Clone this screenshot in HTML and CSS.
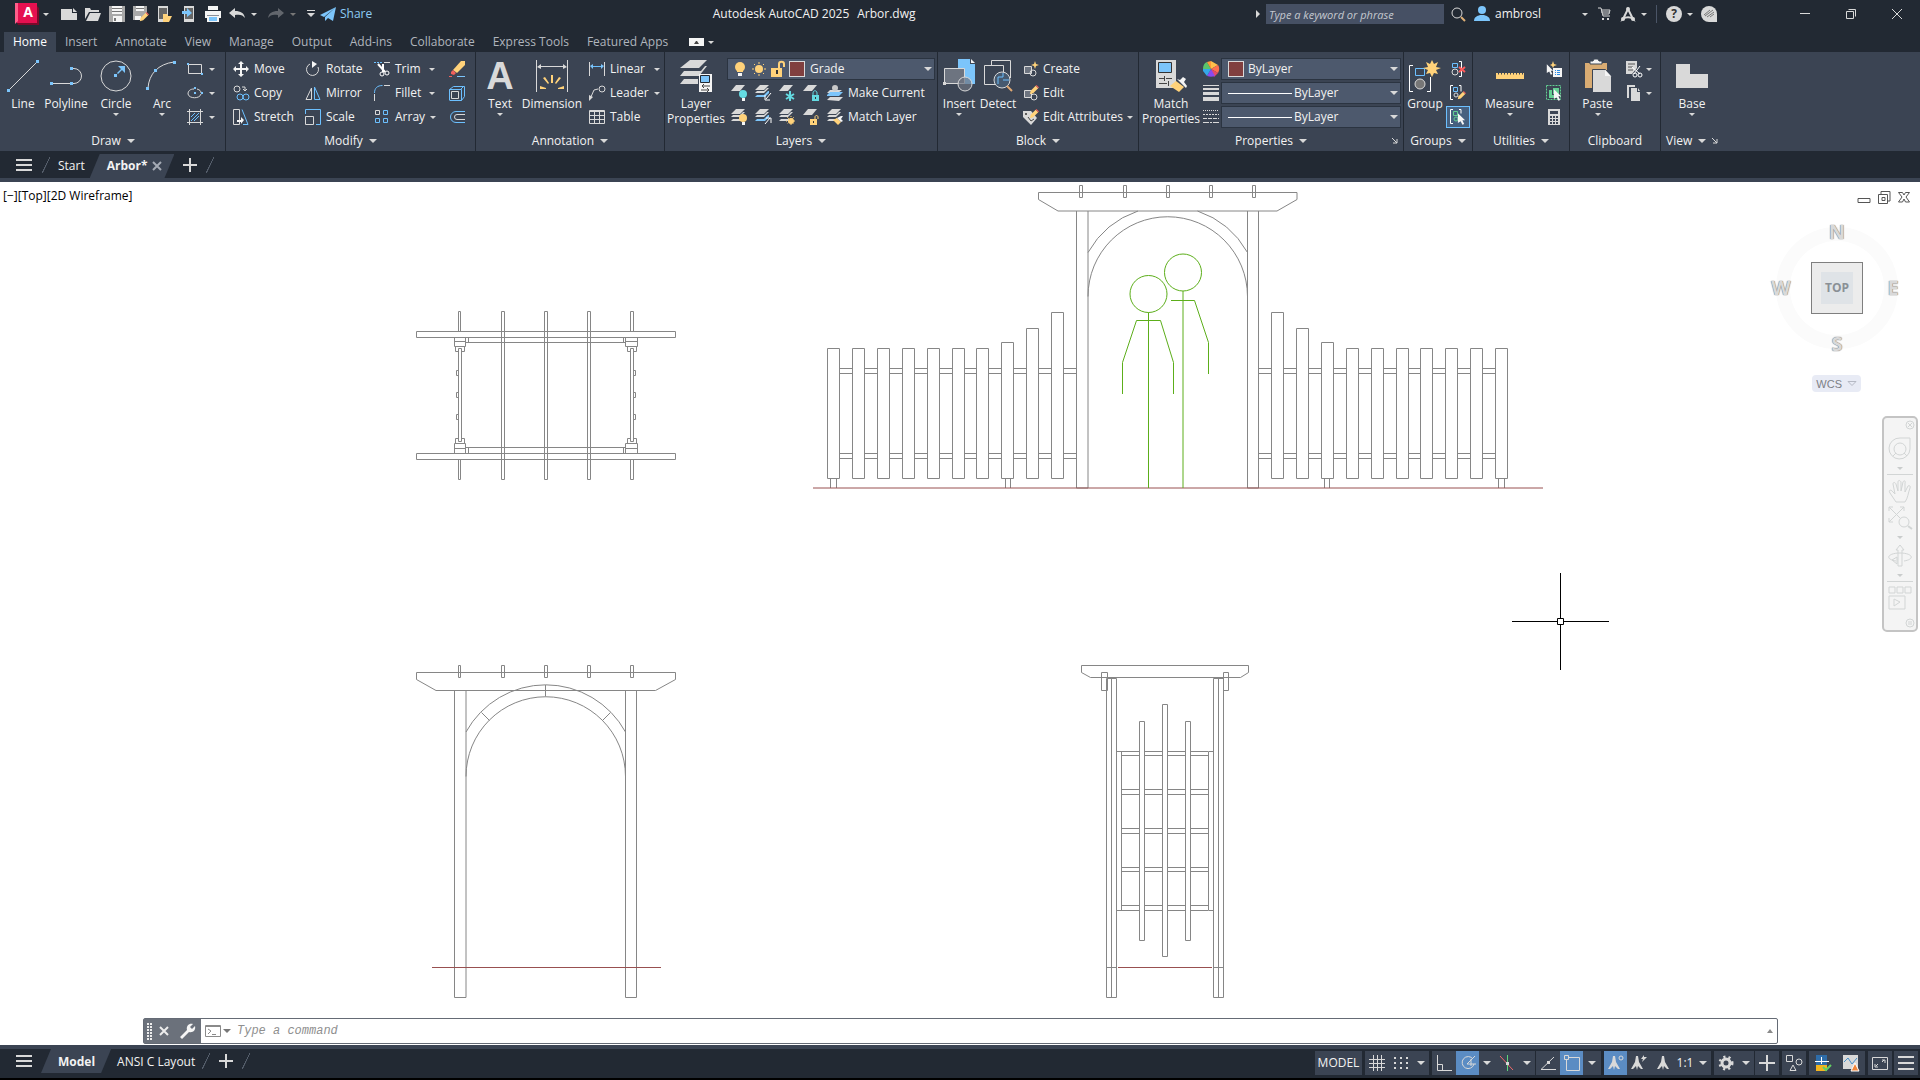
FILE: index.html
```html
<!DOCTYPE html>
<html lang="en">
<head>
    <meta charset="UTF-8">
    <meta name="viewport" content="width=device-width, initial-scale=1.0">
    <title>Autodesk AutoCAD 2025 - Arbor.dwg</title>
    <link rel="stylesheet" href="styles.css">
</head>
<body>
    <!-- shared icon parts -->
    <svg class="sprite" aria-hidden="true">
        <symbol id="sheet" viewBox="0 0 16 16"><path class="w" d="M5 0h9L9 6H0z"/></symbol>
        <symbol id="sheets" viewBox="0 0 16 16">
            <path class="w" d="M5 0h9L9 5H0zM0 8l2-2h7l3-3h2L9 8zM0 12l2-2h7l1-1v3z"/>
        </symbol>
        <symbol id="sheets-blue" viewBox="0 0 16 16">
            <path class="w" d="M5 0h9L9 5H0zM0 8l2-2h7l3-3h2L9 8z"/>
            <path class="bf" d="M0 12l2-2h7l4-4h1v2l-4 4z"/>
        </symbol>
        <symbol id="cursor" viewBox="0 0 10 13"><path class="p" d="M1 0l8 8H6l2 4-2 1-2-4-3 2z"/></symbol>
        <symbol id="pencil" viewBox="0 0 12 12">
            <path class="y" d="M8 1l3 3-6 6-4 1 1-4z"/><path class="r" d="M8 1l1-1 3 3-1 1z"/>
        </symbol>
        <symbol id="menu" viewBox="0 0 16 12"><path class="w" d="M0 0h16v2H0zM0 5h16v2H0zM0 10h16v2H0z"/></symbol>
        <symbol id="plus" viewBox="0 0 14 14"><path class="w" d="M6 0h2v6h6v2H8v6H6V8H0V6h6z"/></symbol>
        <symbol id="anno" viewBox="0 0 16 16"><path class="w" d="M7 1h2l1 6 4 7h-2l-3-3-1 4-1-4-3 3H2l4-7z"/></symbol>
        <symbol id="launch" viewBox="0 0 6 6"><path class="s" d="M0 0l5 5M5 1v4H1"/></symbol>
    </svg>

    <header class="titlebar">
        <div class="quick">
            <button class="app" aria-label="Application menu">
                <svg class="logo" viewBox="0 0 24 23"><path fill="#7a0a2a" d="M22 3l2 2v17H3l-1-2z"/><path fill="#e51050" d="M0 0h22v20H2z"/><path fill="#ff5f8b" d="M0 0h3v18l-3 3z"/><text x="13" y="14" text-anchor="middle">A</text></svg>
                <i class="caret"></i>
            </button>
            <button aria-label="New"><svg viewBox="0 0 16 16"><path class="w" d="M0 3h11v4h5v7H0zM12 2l4 4h-4z"/></svg></button>
            <button aria-label="Open"><svg viewBox="0 0 16 16"><path class="w" d="M0 2h5l1 2h8v2H4L0 13zM5 7h11l-3 8H1z"/></svg></button>
            <button aria-label="Save"><svg viewBox="0 0 16 16"><path fill="#a9a9a9" d="M0 0h16v16H0z"/><path class="p" d="M3 0h10v8H3zM4 10h9v6H4z"/><path fill="#777" d="M3 2h10v1H3zM3 5h10v1H3zM5 12h2v3H5z"/></svg></button>
            <button aria-label="Save as"><svg viewBox="0 0 16 16"><path fill="#a9a9a9" d="M0 0h14v7l-7 7H0z"/><path class="p" d="M3 0h8v5H3zM2 10h6v4H2z"/><path fill="#777" d="M3 2h8v1H3z"/><use href="#pencil" x="6" y="6" width="10" height="10"/></svg></button>
            <button aria-label="Open from mobile"><svg viewBox="0 0 16 16"><path class="w" d="M1 0h10v16H1z"/><path fill="#666" d="M2 2h8v11H2z"/><path class="y" d="M6 8h4l1 2h4l-3 6H6z"/></svg></button>
            <button aria-label="Save to mobile"><svg viewBox="0 0 16 16"><path class="w" d="M3 0h10v16H3z"/><path fill="#666" d="M4 2h8v11H4z"/><path class="bf" d="M1 5h5V2l5 5-5 4V8H1z"/></svg></button>
            <button aria-label="Plot"><svg viewBox="0 0 16 16"><path class="p" d="M3 0h10v4H3zM0 5h16v7H0zM2 12h12v4H2z"/><path fill="#8a8f98" d="M2 9h12v1H2z"/><path class="bf" d="M4 11h8v4H4z"/></svg></button>
            <button aria-label="Undo"><svg viewBox="0 0 16 16"><path class="w" d="M0 7l6-5v3c6 0 9 2 10 7-2-3-5-4-10-3v3z"/></svg></button>
            <i class="caret"></i>
            <button class="off" aria-label="Redo"><svg viewBox="0 0 16 16"><path class="w" d="M16 7l-6-5v3C4 5 1 7 0 12c2-3 5-4 10-3v3z"/></svg></button>
            <i class="caret faded"></i>
            <button class="tiny" aria-label="Customize"><svg viewBox="0 0 8 8"><path class="w" d="M0 0h8v1H0zM0 3h8L4 7z"/></svg></button>
            <a class="share" href="#"><svg viewBox="0 0 16 16"><path class="bf" d="M16 1L0 9l4 2zM16 1L5 11v4l3-3zM16 1L8 12l5 3z"/></svg>Share</a>
        </div>
        <h1><span>Autodesk AutoCAD 2025</span><span>Arbor.dwg</span></h1>
        <div class="account">
            <i class="caret side"></i>
            <input type="text" aria-label="Search" placeholder="Type a keyword or phrase">
            <button aria-label="Search"><svg viewBox="0 0 16 16"><circle class="s" cx="7" cy="7" r="5"/><path stroke="#dfb076" stroke-width="2" d="M11 11l4 4"/></svg></button>
            <button class="user"><svg viewBox="0 0 16 16"><circle class="bf" cx="8" cy="4" r="4"/><path class="bf" d="M0 15c0-4 3-5 6-6h4c3 1 6 2 6 6z"/></svg><span>ambrosl</span><i class="caret"></i></button>
            <button aria-label="Store"><svg viewBox="0 0 16 16"><path class="s" d="M2 2h3l2 8h7M5 4h9l-1 4H7M5 6h8"/><path class="w" d="M6 12h2v2H6zM11 12h2v2h-2z"/></svg></button>
            <button class="with-caret" aria-label="Apps"><svg viewBox="0 0 16 16"><path stroke="#d9d9d9" stroke-width="2" d="M8 3L3 13c3-2 7-2 10 0z"/><circle class="w" cx="8" cy="3" r="2"/><circle class="w" cx="3" cy="13" r="2"/><circle class="w" cx="13" cy="13" r="2"/></svg><i class="caret"></i></button>
            <span class="rule"></span>
            <button class="with-caret" aria-label="Help"><svg viewBox="0 0 16 16"><circle class="w" cx="8" cy="8" r="8"/><text class="help" x="8" y="12" text-anchor="middle">?</text></svg><i class="caret"></i></button>
            <button aria-label="Assistant"><svg viewBox="0 0 16 16"><path class="w" d="M8 0a8 8 0 0 1 8 8v8H8A8 8 0 0 1 8 0z"/><path stroke="#777" d="M3 9l6-5M4 10l8-6M6 11l7-5M9 11l4-3"/></svg></button>
        </div>
        <div class="window">
            <button aria-label="Minimize"><svg viewBox="0 0 10 10"><path class="w" d="M0 4h10v1H0z"/></svg></button>
            <button aria-label="Restore"><svg viewBox="0 0 10 10"><path class="s" d="M.5 2.500h7v7h-7zM2.500.5h7v7"/></svg></button>
            <button aria-label="Close"><svg viewBox="0 0 10 10"><path class="s" d="M0 0l10 10M10 0L0 10"/></svg></button>
        </div>
    </header>

    <nav class="tabs">
        <a class="on" href="#">Home</a>
        <a href="#">Insert</a>
        <a href="#">Annotate</a>
        <a href="#">View</a>
        <a href="#">Manage</a>
        <a href="#">Output</a>
        <a href="#">Add-ins</a>
        <a href="#">Collaborate</a>
        <a href="#">Express Tools</a>
        <a href="#">Featured Apps</a>
        <button aria-label="Minimize ribbon"><svg viewBox="0 0 15 8"><path class="p" d="M0 0h15v8H0z"/><path fill="#444" d="M5 6h5L8 3H7z"/></svg><i class="caret"></i></button>
    </nav>

    <main class="ribbon">
        <section class="panel draw">
            <div class="tools">
                <button class="big line"><svg viewBox="0 0 32 32"><path class="s" d="M3 29L29 3"/><path class="bf" d="M0 29h3v3H0zM29 0h3v3h-3z"/></svg>Line</button>
                <button class="big"><svg viewBox="0 0 32 32"><path class="s" d="M2 23.500h20M22 8.500h2a7 7 0 0 1 0 15h-2"/><path class="bf" d="M0 22h3v3H0zM20 22h3v3h-3zM20 7h3v3h-3z"/></svg>Polyline</button>
                <button class="big circle"><svg viewBox="0 0 32 32"><circle class="s" cx="16" cy="16" r="15"/><path class="bf" d="M14 14h3v3h-3zM25 6v7l-3-3-4 4-1-1 4-4-3-3z"/></svg>Circle<i class="caret"></i></button>
                <button class="big"><svg viewBox="0 0 32 32"><path class="s" d="M2 28C3 14 12 4 28 2"/><path class="bf" d="M0 27h3v3H0zM8 9h3v3H8zM27 1h3v3h-3z"/></svg>Arc<i class="caret"></i></button>
                <div class="col">
                    <button class="tool" aria-label="Rectangle"><svg viewBox="0 0 16 16"><path class="s" d="M1.500 3.500h13v9h-13z"/><path class="bf" d="M0 2h2v2H0zM14 12h2v2h-2z"/></svg><i class="caret"></i></button>
                    <button class="tool" aria-label="Ellipse"><svg viewBox="0 0 16 16"><path class="s" d="M10 4c3 1 4 2 4 4M14 9c-1 5-12 5-13 0 0-3 2-5 6-5"/><path class="bf" d="M7 2h2v2H7zM7 7h2v2H7zM14 7h2v2h-2z"/></svg><i class="caret"></i></button>
                    <button class="tool" aria-label="Hatch"><svg viewBox="0 0 16 16"><path class="s" d="M2.500 0v16M13.500 0v16M0 2.500h16M0 13.500h16"/><path class="b" d="M4 8l4-4M4 12l8-8M7 12l5-5"/></svg><i class="caret"></i></button>
                </div>
            </div>
            <h2>Draw<i class="caret wide"></i></h2>
        </section>

        <section class="panel modify">
            <div class="tools">
                <div class="col c1">
                    <button class="tool"><svg viewBox="0 0 16 16"><path class="p" d="M8 0l3 3H9v4h4V5l3 3-3 3V9H9v4h2l-3 3-3-3h2V9H3v2L0 8l3-3v2h4V3H5z"/></svg>Move</button>
                    <button class="tool"><svg viewBox="0 0 16 16"><circle class="s" cx="4" cy="4" r="3"/><path class="s" d="M9 2h3v4M10 4l2 2 2-2"/><circle class="b" cx="7" cy="12" r="3"/><circle class="b" cx="13" cy="12" r="3"/></svg>Copy</button>
                    <button class="tool"><svg viewBox="0 0 16 16"><path class="s" d="M.5.500h6v15h-6z"/><path class="b" d="M9 .5l6 15h-5"/><path class="p" d="M4 11h4V8l3 3-3 4v-2H4z"/></svg>Stretch</button>
                </div>
                <div class="col c2">
                    <button class="tool"><svg viewBox="0 0 16 16"><path class="s" d="M5 3a6 6 0 1 0 8 3"/><path class="p" d="M7 0l5 3-5 4z"/></svg>Rotate</button>
                    <button class="tool"><svg viewBox="0 0 16 16"><path class="s" d="M6.500 3v11.500H1z"/><path class="b" d="M9.500 2v12.500H15z"/></svg>Mirror</button>
                    <button class="tool"><svg viewBox="0 0 16 16"><path class="b" d="M.5 5V.5h15v15H11"/><path class="s" d="M.5 7.500h8v8h-8z"/></svg>Scale</button>
                </div>
                <div class="col c3">
                    <button class="tool"><svg viewBox="0 0 16 16"><path class="b" stroke-dasharray="2 1" d="M0 1.500h8"/><path class="s" d="M10 1.500h6"/><path stroke="#fff" stroke-width="2" d="M4 3l7 8M9 3v8"/><circle stroke="#fff" cx="8" cy="13" r="2"/><circle stroke="#fff" cx="13" cy="12" r="2"/></svg>Trim<i class="caret"></i></button>
                    <button class="tool"><svg viewBox="0 0 16 16"><path class="b" d="M.5 8c0-5 3-7.500 8-7.500"/><path class="s" d="M10 .5h6M.5 9v7"/></svg>Fillet<i class="caret"></i></button>
                    <button class="tool"><svg viewBox="0 0 16 16"><path class="s" d="M1.500 1.500h4v4h-4z"/><path class="b" d="M9.500 1.500h4v4h-4zM1.500 9.500h4v4h-4zM9.500 9.500h4v4h-4z"/></svg>Array<i class="caret"></i></button>
                </div>
                <div class="col">
                    <button class="tool" aria-label="Erase"><svg viewBox="0 0 16 16"><path class="y" d="M12 0h4v4l-8 8-4-3z"/><path class="r" d="M4 9l3 3-2 2-3-1V11zM0 15h3v1H0z"/><path class="bf" d="M8 15h8v1H8z"/></svg></button>
                    <button class="tool" aria-label="Explode"><svg viewBox="0 0 16 16"><path class="s" d="M2.500 6.500h7v7h-7z"/><path class="b" d="M.5 15V4.500l4-3h11v10l-3 4M.5 4.500h12v11M.5 15.500h12M12 4l3-3"/></svg></button>
                    <button class="tool" aria-label="Offset"><svg viewBox="0 0 16 16"><path class="b" d="M16 2.500H7a5 5 0 0 0 0 11h9"/><path class="s" d="M16 5.500H8a2 2 0 0 0 0 5h8"/></svg></button>
                </div>
            </div>
            <h2>Modify<i class="caret wide"></i></h2>
        </section>

        <section class="panel annotation">
            <div class="tools">
                <button class="big text"><svg viewBox="0 0 32 32"><text class="glyph" x="16" y="29" text-anchor="middle">A</text></svg>Text<i class="caret"></i></button>
                <button class="big dim"><svg viewBox="0 0 32 32"><path class="s" d="M.5 0v32M31.500 0v32M3 6.500h26"/><path class="w" d="M1 7l4-3v5zM31 7l-4-3v5z"/><path class="y" d="M15 15h2v8h-2zM7 18l2-1 4 6-1 1zM25 18l-2-1-4 6 1 1zM4 26l6 2v1H4zM28 26l-6 2v1h6z"/></svg>Dimension</button>
                <div class="col">
                    <button class="tool"><svg viewBox="0 0 16 16"><path class="s" d="M.5 1v14M15.500 1v14"/><path class="b" d="M2 5.500h12"/><path class="bf" d="M1 5l3-2v5zM15 5l-3-2v5z"/></svg>Linear<i class="caret"></i></button>
                    <button class="tool"><svg viewBox="0 0 16 16"><path class="s" d="M1 14L5 5l4-1"/><circle class="s" cx="13" cy="4" r="3"/><path class="w" d="M0 16v-6l4 2z"/></svg>Leader<i class="caret"></i></button>
                    <button class="tool"><svg viewBox="0 0 16 16"><path class="s" d="M.5 1.500h15v13H.5zM0 2.500h16M0 6.500h16M0 10.500h16M5.500 3v12M10.500 3v12"/></svg>Table</button>
                </div>
            </div>
            <h2>Annotation<i class="caret wide"></i></h2>
        </section>

        <section class="panel layers">
            <div class="tools">
                <button class="big"><svg viewBox="0 0 32 32"><path class="w" d="M10 0h17l-8 8H0zM0 16l4-5h17l4-5h2l-8 10zM0 24l4-5h14v5z"/><path class="p" d="M19 14h13v18H19z"/><path class="bf" stroke="#222933" d="M20.500 15.500h9v7h-9z"/><path stroke="#444" d="M22 26h8M24 24l-2 2 2 2M21 30h8M27 28l2 2-2 2"/></svg>Layer<br>Properties</button>
                <div class="col">
                    <div class="combo">
                        <svg viewBox="0 0 16 16"><circle class="y" cx="8" cy="6" r="5"/><path class="y" d="M5 9h6v2H5z"/><path class="p" d="M6 12h4v3H6z"/></svg>
                        <svg viewBox="0 0 16 16"><circle class="y" cx="8" cy="8" r="4"/><path stroke="#ffd27a" d="M8 1v2M8 13v2M1 8h2M13 8h2M3 3l1 1M12 12l1 1M3 13l1-1M12 4l1-1"/></svg>
                        <svg viewBox="0 0 16 16"><path class="y" d="M1 7h11v9H1z"/><path stroke="#ffd27a" stroke-width="2" d="M9 7V3c0-3 5-3 5 0v3"/><path fill="#333" d="M6 9h2v4H6z"/></svg>
                        <span class="swatch"></span>
                        <select aria-label="Layer"><option>Grade</option></select>
                        <i class="caret wide"></i>
                    </div>
                    <div class="row">
                        <button class="tool" aria-label="Off"><svg viewBox="0 0 16 16"><use href="#sheet"/><circle class="t" cx="12" cy="9" r="4"/><path class="p" d="M11 13h3v3h-3z"/></svg></button>
                        <button class="tool" aria-label="Isolate"><svg viewBox="0 0 16 16"><use href="#sheets-blue"/><path stroke="#fff" d="M16 8l-5 6M10 10v5h5"/></svg></button>
                        <button class="tool" aria-label="Freeze"><svg viewBox="0 0 16 16"><use href="#sheet"/><path stroke="#64dbe2" stroke-width="2" d="M11 6v10M7 9l8 5M7 14l8-5"/></svg></button>
                        <button class="tool" aria-label="Lock"><svg viewBox="0 0 16 16"><use href="#sheet"/><path stroke="#64dbe2" d="M10 10V8c0-3 4-3 4 0v2"/><path class="t" d="M9 10h7v6H9z"/><path fill="#333" d="M12 12h1v2h-1z"/></svg></button>
                        <button class="tool"><svg viewBox="0 0 16 16"><path class="w" d="M3 5h12l-4 3H0z"/><path class="bf" d="M0 10l3-3h13l-4 4H0z"/><path class="w" d="M0 15l3-3h13l-4 4z"/><circle cx="8" cy="3" r="3" fill="#c8c8c8"/></svg>Make Current</button>
                    </div>
                    <div class="row">
                        <button class="tool" aria-label="Turn on"><svg viewBox="0 0 16 16"><use href="#sheets"/><circle class="y" cx="12" cy="9" r="4"/><path class="p" d="M11 13h3v3h-3z"/></svg></button>
                        <button class="tool" aria-label="Unisolate"><svg viewBox="0 0 16 16"><use href="#sheets-blue"/><path stroke="#fff" d="M10 15l5-6M11 9h5v5"/></svg></button>
                        <button class="tool" aria-label="Thaw"><svg viewBox="0 0 16 16"><use href="#sheets"/><circle class="y" cx="12" cy="12" r="3"/><path stroke="#ffd27a" stroke-dasharray="1 1" d="M12 7v9M7 12h9M8 8l7 7M15 8l-7 7"/></svg></button>
                        <button class="tool" aria-label="Unlock"><svg viewBox="0 0 16 16"><use href="#sheet"/><path stroke="#ffd27a" d="M12 11V8c0-2 3-2 3 0v2"/><path class="y" d="M7 10h7v6H7z"/><path fill="#333" d="M10 12h1v2h-1z"/></svg></button>
                        <button class="tool"><svg viewBox="0 0 16 16"><use href="#sheets"/><path class="y" d="M6 11l4-2 4 4-3 3z"/><path class="p" d="M10 9l4 4 2-1-2-2 2-3h-2l-2 1z"/></svg>Match Layer</button>
                    </div>
                </div>
            </div>
            <h2>Layers<i class="caret wide"></i></h2>
        </section>

        <section class="panel block">
            <div class="tools">
                <button class="big insert"><svg viewBox="0 0 32 32"><path class="bf" d="M15-1h12v5h5v20H15z"/><path class="p" d="M28-1l4 4h-4z"/><path fill="#6d7480" stroke="#d9d9d9" d="M1.500 8.500h20v15h-20z"/><circle cx="22" cy="24" r="7" fill="#6d7480" fill-opacity=".7" stroke="#d9d9d9"/><path class="w" d="M0 22h3v3H0z"/></svg>Insert<i class="caret"></i></button>
                <button class="big detect"><svg viewBox="0 0 32 32"><path class="s" d="M9.500 5V.5h19V18M2.500 5.500h19v19h-19z"/><circle cx="20" cy="20" r="8" fill="#46596f" stroke="#d9d9d9" stroke-width="1"/><path class="b" d="M16 24v-7h5v-4M21 20h6"/><path stroke="#dfa873" stroke-width="2" d="M25 26l5 5"/></svg>Detect</button>
                <div class="col">
                    <button class="tool"><svg viewBox="0 0 16 16"><path fill="#6d7480" stroke="#d9d9d9" d="M1.500 5.500h7v7h-7z"/><circle class="s" cx="10" cy="12" r="3"/><path class="y" d="M12 0l1 3 3 1-3 1-1 3-1-3-3-1 3-1z"/></svg>Create</button>
                    <button class="tool"><svg viewBox="0 0 16 16"><path fill="#6d7480" stroke="#d9d9d9" d="M1.500 5.500h7v7h-7z"/><circle class="s" cx="11" cy="12" r="3"/><use href="#pencil" x="6" y="0" width="10" height="10"/></svg>Edit</button>
                    <button class="tool"><svg viewBox="0 0 16 16"><path class="w" d="M0 2h8l6 7-6 7-8-8z"/><circle cx="3" cy="5" r="1" fill="#333"/><path stroke="#444" d="M5 8l3 4 3-2"/><use href="#pencil" x="6" y="0" width="10" height="10"/></svg>Edit Attributes<i class="caret"></i></button>
                </div>
            </div>
            <h2>Block<i class="caret wide"></i></h2>
        </section>

        <section class="panel properties">
            <div class="tools">
                <button class="big"><svg viewBox="0 0 32 32"><path class="w" d="M1 0h20v28H1z"/><path class="bf" stroke="#333" d="M3.500 2.500h13v10h-13z"/><path stroke="#444" d="M4 18.500h5M11 18.500h6M9.500 16v5M4 23.500h8M13.500 21v5"/><path class="y" d="M15 26l6-5 8 6-5 5z"/><path class="p" d="M22 19l9 9 1-2-3-4 2-3-3-2-3 3z"/></svg>Match<br>Properties</button>
                <div class="col icons">
                    <svg viewBox="0 0 16 16"><path fill="#ffc04a" d="M8 8V0l7 4z"/><path fill="#ff7050" d="M8 8l7-4c2 3 1 6 0 8z"/><path fill="#e84a6a" d="M8 8l7 4-4 4z"/><path fill="#8a4af0" d="M8 8l4 7c-3 1-5 1-8 0z"/><path fill="#35a8e8" d="M8 8l-4 7-4-5V8z"/><path fill="#5ac46a" d="M8 8H0c0-3 1-6 4-7z"/><path fill="#ff9a3a" d="M8 8L4 1l4-1z"/></svg>
                    <svg viewBox="0 0 16 16"><path class="w" d="M0 0h16v1H0zM0 3h16v2H0zM0 7h16v3H0zM0 12h16v4H0z"/></svg>
                    <svg viewBox="0 0 16 16"><path class="s" stroke-dasharray="1 1" d="M0 1.500h16"/><path class="s" stroke-dasharray="2 1" d="M0 5.500h16"/><path class="s" stroke-dasharray="4 1" d="M0 9.500h16"/><path class="s" stroke-dasharray="6 1 2 1" d="M0 13.500h16"/></svg>
                </div>
                <div class="col combos">
                    <div class="combo"><span class="swatch"></span><select aria-label="Object color"><option>ByLayer</option></select><i class="caret wide"></i></div>
                    <div class="combo"><span class="stroke"></span><select aria-label="Lineweight"><option>ByLayer</option></select><i class="caret wide"></i></div>
                    <div class="combo"><span class="stroke"></span><select aria-label="Linetype"><option>ByLayer</option></select><i class="caret wide"></i></div>
                </div>
            </div>
            <h2><span>Properties<i class="caret wide"></i></span><svg class="launcher"><use href="#launch"/></svg></h2>
        </section>

        <section class="panel groups">
            <div class="tools">
                <button class="big"><svg viewBox="0 0 32 32"><path stroke="#fff" d="M4 5.500H.5v26H4M18 31.500h3.500V17"/><path class="b" d="M6.500 8.500h9v7h-9z"/><circle cx="11" cy="24" r="5" fill="#777" stroke="#d9d9d9"/><path class="y" d="M23 0l2 4 4-2-2 5 5 1-5 2 2 4-4-1-2 4-2-4-4 1 2-4-5-2 5-1-2-5 4 2z"/></svg>Group</button>
                <div class="col">
                    <button class="tool" aria-label="Ungroup"><svg viewBox="0 0 16 16"><path class="b" d="M2.500 2.500h5v4h-5z"/><circle class="s" cx="5" cy="11" r="3"/><path stroke="#fff" d="M9 .5h2.500v15H9"/><path stroke="#ff5c5c" stroke-width="2" d="M9 6l6 5M15 6l-6 5"/></svg></button>
                    <button class="tool" aria-label="Group edit"><svg viewBox="0 0 16 16"><path stroke="#fff" d="M3 .5H.5v14H3M9 .5h2v6"/><path class="b" d="M3.500 2.500h4v4h-4z"/><circle class="s" cx="6" cy="10" r="2"/><use href="#pencil" x="7" y="6" width="9" height="9"/></svg></button>
                    <button class="tool active" aria-label="Group selection"><svg viewBox="0 0 16 16"><path stroke="#fff" d="M3 .5H.5v14H3M9 .5h2v4"/><path class="g" d="M3.500 2.500h4v4h-4z"/><circle class="g" cx="6" cy="10" r="2"/><use href="#cursor" x="7" y="4" width="9" height="12"/></svg></button>
                </div>
            </div>
            <h2>Groups<i class="caret wide"></i></h2>
        </section>

        <section class="panel utilities">
            <div class="tools">
                <button class="big"><svg viewBox="0 0 32 32"><path class="y" d="M2 13h28v6H2z"/><path stroke="#3b4453" stroke-dasharray="1 2" stroke-width="3" d="M4 13h25"/></svg>Measure<i class="caret"></i></button>
                <div class="col">
                    <button class="tool" aria-label="Quick select"><svg viewBox="0 0 16 16"><path class="y" d="M7 0l1 3 3 1-3 1-1 2-1-2-2-1 2-1z"/><use href="#cursor" x="0" y="3" width="8" height="11"/><path class="p" d="M7 7h9v9H7z"/><path stroke="#2f8de4" d="M9 9.500h1M11 9.500h3M9 11.500h1M11 11.500h3M9 13.500h1M11 13.500h3"/></svg></button>
                    <button class="tool" aria-label="Select all"><svg viewBox="0 0 16 16"><path class="g" stroke-dasharray="2 1" d="M.5.500h14v14H.5z"/><path fill="#63cf93" d="M3 5h3v5h5v3H3zM7 3h6v6H7z"/><use href="#cursor" x="7" y="4" width="9" height="12"/></svg></button>
                    <button class="tool" aria-label="Calculator"><svg viewBox="0 0 16 16"><path class="w" d="M2 0h12v16H2z"/><path fill="#3b4453" d="M4 2h8v3H4zM4 7h2v2H4zM7 7h2v2H7zM10 7h2v2h-2zM4 10h2v2H4zM7 10h2v2H7zM10 10h2v2h-2zM4 13h2v2H4zM7 13h2v2H7zM10 13h2v2h-2z"/></svg></button>
                </div>
            </div>
            <h2>Utilities<i class="caret wide"></i></h2>
        </section>

        <section class="panel clipboard">
            <div class="tools">
                <button class="big"><svg viewBox="0 0 32 32"><path fill="#d9ac73" d="M3 3h22v25H3z"/><path class="p" stroke="#3b4453" d="M8 1h3l1-2h4l1 2h3v3H8z"/><path class="w" stroke="#3b4453" d="M10.500 9.500h13l6 7v16h-19z"/><path class="p" d="M23 10v6h6z"/></svg>Paste<i class="caret"></i></button>
                <div class="col">
                    <button class="tool" aria-label="Cut"><svg viewBox="0 0 16 16"><path class="w" d="M0 0h11v7l-5 6H0z"/><path stroke="#555" d="M2 3h7M2 6h5M2 9h5"/><path stroke="#fff" d="M6 6l8 7M14 5l-6 8"/><circle stroke="#fff" cx="9" cy="14" r="2"/><circle stroke="#fff" cx="14" cy="14" r="2"/></svg><i class="caret"></i></button>
                    <button class="tool" aria-label="Copy clip"><svg viewBox="0 0 16 16"><path class="w" d="M1 0h8v2H3v11H1zM5 3h6v4h3v9H5zM12 3l2 3h-2z"/></svg><i class="caret"></i></button>
                </div>
            </div>
            <h2>Clipboard</h2>
        </section>

        <section class="panel view">
            <div class="tools">
                <button class="big"><svg viewBox="0 0 32 32"><path class="w" d="M0 4h14v10h18v14H0z"/></svg>Base<i class="caret"></i></button>
            </div>
            <h2>View<i class="caret wide"></i><svg class="launcher"><use href="#launch"/></svg></h2>
        </section>
    </main>

    <nav class="filetabs">
        <button aria-label="Menu"><svg class="menu"><use href="#menu"/></svg></button>
        <i class="slash"></i>
        <a href="#">Start</a>
        <a class="on" href="#">Arbor*<svg class="close" viewBox="0 0 8 8"><path d="M0 0l8 8M8 0L0 8"/></svg></a>
        <button aria-label="New drawing"><svg class="plus"><use href="#plus"/></svg></button>
        <i class="slash"></i>
    </nav>

    <div class="canvas">
        <svg class="drawing" viewBox="0 182 1920 863">
            <!-- plan view -->
            <g>
                <path d="M416.500 331.500h259v6h-259zM416.500 453.500h259v6h-259z"/>
                <path d="M501.500 311.500h3v168h-3zM544.500 311.500h3v168h-3zM587.500 311.500h3v168h-3z"/>
                <path d="M458.500 331v-19.500h2V331M630.500 331v-19.500h3V331M458.500 460v19.500h2V460M630.500 460v19.500h3V460"/>
                <path d="M454.500 337.500h11v9h-11zM454.500 341.500h11M625.500 337.500h12v9h-12zM625.500 341.500h12M454.500 443.500h11v10h-11zM454.500 448.500h11M625.500 443.500h12v10h-12zM625.500 448.500h12"/>
                <path d="M465.500 342.500h160M468.500 337.500v5M623.500 337.500v5M465.500 447.500h160M468.500 447.500v6M623.500 447.500v6"/>
                <path d="M458.500 348.500h3v93h-3zM630.500 348.500h3v93h-3z"/>
                <path d="M455.500 346.500v5h3M464.500 346.500v5h-3M627.500 346.500v5h3M636.500 346.500v5h-3M455.500 443.500v-5h3M464.500 443.500v-5h-3M627.500 443.500v-5h3M636.500 443.500v-5h-3"/>
                <path d="M456.500 370.500h2v5h-2zM456.500 392.500h2v5h-2zM456.500 414.500h2v5h-2zM633.500 370.500h2v5h-2zM633.500 392.500h2v5h-2zM633.500 414.500h2v5h-2z"/>
            </g>
            <!-- front elevation with fence -->
            <g>
                <path d="M1038.500 192.500h258.500v7l-20 11.500h-219l-19.500-11.500z"/>
                <path d="M1079.500 185.500h3v12h-3zM1123.500 185.500h3v12h-3zM1166.500 185.500h3v12h-3zM1209.500 185.500h3v12h-3zM1252.500 185.500h3v12h-3z"/>
                <path d="M1076.500 211v277h11.500V211M1247.500 211v277h11V211"/>
                <path d="M1088 296.500a79.750 79.750 0 0 1 159.500 0M1088 252.500a91 91 0 0 1 50-41.500M1247.500 252.500a91 91 0 0 0-50-41.500"/>
                <path d="M839.500 368.500h237M839.500 373.500h237M839.500 453.500h237M839.500 458.500h237M1258.500 368.500h237M1258.500 373.500h237M1258.500 453.500h237M1258.500 458.500h237"/>
                <path class="solid" d="M827.500 348.500h12v130h-12zM852.500 348.500h12v130h-12zM877.500 348.500h12v130h-12zM902.500 348.500h12v130h-12zM927.500 348.500h12v130h-12zM952.500 348.500h12v130h-12zM976.500 348.500h12v130h-12zM1001.500 342.500h12v136h-12zM1026.500 328.500h12v150h-12zM1051.500 312.500h12v166h-12z"/>
                <path class="solid" d="M1271.500 312.500h12v166h-12zM1296.500 328.500h12v150h-12zM1321.500 342.500h12v136h-12zM1346.500 348.500h12v130h-12zM1371.500 348.500h12v130h-12zM1396.500 348.500h12v130h-12zM1420.500 348.500h12v130h-12zM1445.500 348.500h12v130h-12zM1470.500 348.500h12v130h-12zM1495.500 348.500h12v130h-12z"/>
                <path d="M830.500 478v10M836.500 478v10M1005.500 478v10M1010.500 478v10M1324.500 478v10M1329.500 478v10M1498.500 478v10M1504.500 478v10"/>
            </g>
            <path class="grade" d="M813 488h730"/>
            <g class="people">
                <circle cx="1148.500" cy="294" r="18.500"/>
                <path d="M1148.500 312.500V488M1122.500 394v-31.500l14-42h24l13 42V394"/>
                <circle cx="1183" cy="272.500" r="18.500"/>
                <path d="M1183 291v197M1171 300.500h23.500l14 42V374"/>
            </g>
            <!-- arbor front -->
            <g>
                <path d="M416.500 672.500h259v7l-20 11h-219.500l-19.500-11z"/>
                <path d="M458.500 665.500h2v12h-2zM501.500 665.500h3v12h-3zM544.500 665.500h3v12h-3zM587.500 665.500h3v12h-3zM630.500 665.500h3v12h-3z"/>
                <path d="M454.500 690v307.500H466V690M625.500 690v307.500h11V690"/>
                <path d="M466 776.500a79.750 79.750 0 0 1 159.500 0M466 732a91 91 0 0 1 159.500 0M545.500 685v11.500M481.500 712.500l8 8M610.500 712.500l-8 8"/>
            </g>
            <path class="grade" d="M432 967.500h229"/>
            <!-- arbor side -->
            <g>
                <path d="M1081.500 665.500h167v7l-8 5h-150l-9-5zM1101.500 672.500h6v18h-6zM1223.500 672.500h5v18h-5z"/>
                <path d="M1106.500 678.500h10v319h-10zM1111.500 678.500v319M1213.500 678.500h10v319h-10zM1218.500 678.500v319M1106 967.500h10M1213 967.500h10"/>
                <path d="M1116.500 751.500h5v159h-5M1208.500 751.500h5v159h-5zM1121 751.500h87M1121 755.500h87M1121 789.500h87M1121 794.500h87M1121 828.500h87M1121 833.500h87M1121 867.500h87M1121 871.500h87M1121 905.500h87M1121 910.500h87"/>
                <path class="solid" d="M1139.500 721.500h5v219h-5zM1162.500 704.500h5v252h-5zM1185.500 721.500h5v219h-5z"/>
            </g>
            <path class="grade" d="M1118 967.500h94"/>
            <path class="cross" d="M1512 621.500h46M1563 621.500h46M1560.500 573v46M1560.500 624v46M1557.500 618.500h6v6h-6z"/>
        </svg>

        <div class="viewlabel">[−][Top][2D Wireframe]</div>
        <div class="viewctl">
            <svg viewBox="0 0 14 14"><path d="M1 8.500h12v4H1z"/></svg>
            <svg viewBox="0 0 14 14"><path d="M1.500 4.500h9v9h-9zM4 4V1.500h9V11h-2M5 7.500h3v3H5z"/></svg>
            <svg viewBox="0 0 14 14"><path d="M1.500 2.500h4L7 5l1.500-2.500h4L9 7l3.500 5h-4L7 9l-1.500 3h-4L5 7z"/></svg>
        </div>
        <div class="viewcube">
            <b class="north">N</b><b class="west">W</b><button>TOP</button><b class="east">E</b><b class="south">S</b>
        </div>
        <button class="wcs">WCS<svg viewBox="0 0 10 6"><path d="M1 .5h8l-4 4z"/></svg></button>
        <div class="navbar">
            <svg class="corner" viewBox="0 0 8 8"><circle cx="4" cy="4" r="4"/><path d="M2 2l4 4M6 2L2 6"/></svg>
            <svg viewBox="0 0 24 24"><path d="M12 1h10v11A10.500 10.500 0 1 1 12 1z"/><circle cx="12" cy="12" r="6"/><path d="M8 16l-3 3M16 16l3 3"/></svg>
            <i class="caret"></i>
            <hr>
            <svg viewBox="0 0 24 24"><path d="M8 23L2 14c-2-3 1-4 3-1l2 2L5 5c0-2 2-2 3 0l2 7V3c0-2 2-2 3 0v9l2-9c1-2 3-1 2 1v9l3-6c1-1 3 0 2 2-2 5-2 10-5 14z"/></svg>
            <svg viewBox="0 0 24 24"><path d="M1 1l15 15M16 1L1 16M1 5V1h4M12 1h4v4M1 12v4h4"/><circle class="lens" cx="16" cy="16" r="5"/><path stroke-width="2" d="M20 20l4 3"/></svg>
            <i class="caret"></i>
            <svg viewBox="0 0 24 24"><path d="M10 22V6H8l4-5 4 5h-2v16zM8 17C-4 15 0 9 12 9s16 6 4 8M4 16l5-3v7z"/></svg>
            <i class="caret"></i>
            <hr>
            <svg viewBox="0 0 24 24"><path d="M1 1h6v6H1zM9 1h6v6H9zM17 1h6v6h-6zM1 10h16v13H1zM6 13l6 3-6 4z"/></svg>
            <svg class="corner last" viewBox="0 0 8 8"><circle cx="4" cy="4" r="4"/><path d="M2 3h4M2 5h4"/></svg>
        </div>

        <div class="command">
            <div class="grip">
                <i class="dots"></i>
                <button aria-label="Close"><svg viewBox="0 0 10 10"><path d="M1 1l8 8M9 1L1 9"/></svg></button>
                <button aria-label="Customize"><svg class="wrench" viewBox="0 0 16 16"><path class="p" d="M0 14l7-7c-1-4 2-7 6-6l-3 3 2 2 3-3c1 4-2 7-6 6l-7 7z"/></svg></button>
            </div>
            <svg class="prompt" viewBox="0 0 16 12"><path d="M.5.500h15v11H.5zM0 1.500h16M3 4l3 2-3 3M7 9.500h4"/></svg>
            <i class="caret wide"></i>
            <input type="text" aria-label="Command" placeholder="Type a command">
            <i class="caret up"></i>
        </div>
    </div>

    <footer class="status">
        <nav class="layouts">
            <button aria-label="Menu"><svg class="menu"><use href="#menu"/></svg></button>
            <a class="on" href="#">Model</a>
            <a href="#">ANSI C Layout</a>
            <i class="slash"></i>
            <button aria-label="New layout"><svg class="plus"><use href="#plus"/></svg></button>
            <i class="slash"></i>
        </nav>
        <div class="toggles">
            <div class="set model"><button>MODEL</button></div>
            <div class="set">
                <button aria-label="Grid"><svg viewBox="0 0 16 16"><path class="s" d="M4.500 0v16M8.500 0v16M12.500 0v16M0 4.500h16M0 8.500h16M0 12.500h16"/></svg></button>
                <button aria-label="Snap"><svg viewBox="0 0 16 16"><path class="s" stroke-width="2" stroke-dasharray="2 4" d="M1 3h14M1 8h14M1 13h14"/></svg></button>
                <i class="caret wide"></i>
            </div>
            <div class="set">
                <button aria-label="Ortho"><svg viewBox="0 0 16 16"><path class="s" d="M1.500 0v15.500H16M1.500 9.500h5v6"/></svg></button>
                <button class="on" aria-label="Polar"><svg viewBox="0 0 16 16"><path class="s" d="M13 4a6 6 0 1 0 1 5M7 9h9M7 9l8-8M11 4v7"/></svg></button>
                <i class="caret wide"></i>
                <button aria-label="Isodraft"><svg viewBox="0 0 16 16"><path stroke="#f06a6a" d="M1 1l13 14"/><path stroke="#5ed47a" d="M8.500 0v16"/><path class="w" d="M7 7h3v3H7z"/></svg></button>
                <i class="caret wide"></i>
            </div>
            <div class="set joined">
                <button aria-label="Tracking"><svg viewBox="0 0 16 16"><path class="s" d="M14 2L1 14.500h15"/><path class="w" d="M7 6h3v3H7z"/></svg></button>
                <button class="on" aria-label="Object snap"><svg viewBox="0 0 16 16"><path class="s" d="M5 2.500h10.500v13h-13V5M.5.500h4v4h-4z"/></svg></button>
                <i class="caret wide"></i>
            </div>
            <div class="set">
                <button class="on" aria-label="Annotation visibility"><svg viewBox="0 0 16 16"><use href="#anno" x="-2"/><circle class="s" cx="13" cy="3" r="2"/></svg></button>
                <button aria-label="Auto scale"><svg viewBox="0 0 16 16"><use href="#anno" x="-2"/><path class="w" d="M13 0l-3 4h2l-1 3 5-5h-3z"/></svg></button>
                <button aria-label="Annotation scale"><svg viewBox="0 0 16 16"><use href="#anno"/></svg></button>
                <button class="scale">1:1</button>
                <i class="caret wide"></i>
            </div>
            <div class="set">
                <button aria-label="Workspace"><svg viewBox="0 0 16 16"><circle cx="8" cy="8" r="4" stroke="#d9d9d9" stroke-width="3"/><circle cx="8" cy="8" r="6" stroke="#d9d9d9" stroke-width="3" stroke-dasharray="2 3"/></svg></button>
                <i class="caret wide"></i>
            </div>
            <div class="set joined"><button aria-label="Monitor"><svg viewBox="0 0 16 16"><path class="w" d="M7 0h2v7h7v2H9v7H7V9H0V7h7z"/></svg></button></div>
            <div class="set"><button aria-label="Isolate objects"><svg viewBox="0 0 16 16"><path class="s" d="M.5.500h6v6h-6zM4 15.500h6L7 10z"/><circle class="s" cx="13" cy="7" r="3"/></svg></button></div>
            <div class="set pair">
                <button aria-label="Performance"><svg viewBox="0 0 16 16"><path fill="#f3b51f" d="M1 7h11v9H1z"/><path fill="#2e6ca8" d="M1 0h11v10H1z"/><path stroke="#fff" d="M0 6.500h14M6.500 2v7"/><path stroke="#63cf63" stroke-width="2" d="M8 12l3 3 5-5"/></svg></button>
                <button aria-label="Trusted"><svg viewBox="0 0 16 16"><path class="w" d="M0 0h15v14H0z"/><path stroke="#458fc8" d="M1 7l4-4 4 6 5-6"/><path fill="#f0863c" stroke="#fff" d="M12 8l4 8H8z"/></svg></button>
            </div>
            <div class="set"><button aria-label="Clean screen"><svg viewBox="0 0 16 16"><path class="s" d="M.5 2.500h15v12H.5zM3 9v3h3M10 5h3v3M4 11l2-2M10 7l2-2"/></svg></button></div>
            <div class="set end"><button aria-label="Customization"><svg viewBox="0 0 16 16"><path class="w" d="M0 1h16v2H0zM0 7h16v2H0zM0 13h16v2H0z"/></svg></button></div>
        </div>
    </footer>
</body>
</html>
```
FILE: styles.css
```css
*, *::before {
    box-sizing: border-box;
}
body {
    margin: 0;
    height: 100vh;
    display: flex;
    flex-direction: column;
    background: #000;
    color: #f2f2f2;
    font: 12px/16px "Open Sans", "Noto Sans", sans-serif;
    overflow: hidden;
}
button, a {
    display: flex;
    align-items: center;
    padding: 0;
    border: 0;
    background: none;
    color: inherit;
    font: inherit;
    text-decoration: none;
    white-space: nowrap;
}
svg {
    display: block;
    flex: none;
    width: 16px;
    height: 16px;
    fill: none;
    overflow: visible;
}
input, select {
    font: inherit;
    color: inherit;
    border: 0;
    padding: 0;
    outline: 0;
    min-width: 0;
}
.sprite {
    position: absolute;
    width: 0;
    height: 0;
}

/* icon colours */
.w { fill: #d9d9d9; }
.p { fill: #f5f5f5; }
.s { stroke: #d9d9d9; }
.b { stroke: #6cc0ff; }
.bf { fill: #7cc5fb; }
.y { fill: #ffd27a; }
.r { fill: #f0605c; }
.t { fill: #64dbe2; }
.g { stroke: #63cf93; }

.caret {
    flex: none;
    border: 3px solid transparent;
    border-top-color: #d9d9d9;
    border-bottom: 0;
}
.caret.wide {
    border-width: 4px 4px 0;
}
.caret.faded {
    border-top-color: #777;
}
.caret.side {
    border: 4px solid transparent;
    border-left-color: #d9d9d9;
    border-right: 0;
}
.caret.up {
    border: 3px solid transparent;
    border-bottom: 4px solid #8a8a8a;
    border-top: 0;
}

/* title bar */
.titlebar {
    display: flex;
    align-items: center;
    justify-content: space-between;
    flex: none;
    height: 32px;
    padding-bottom: 4px;
    background: #222933;
}
.titlebar h1 {
    display: flex;
    gap: 8px;
    margin: 0 auto;
    font-size: 12px;
    font-weight: 400;
}
.quick {
    display: flex;
    align-items: center;
    gap: 8px;
    padding-left: 15px;
}
.app {
    gap: 4px;
    margin-right: 4px;
}
.logo {
    width: 24px;
    height: 23px;
}
.logo text {
    fill: #fff;
    font-weight: 700;
    font-size: 14px;
}
.quick .caret {
    margin: 0 3px 0 -2px;
}
.quick .app .caret {
    margin: 0;
}
.tiny svg {
    width: 8px;
    height: 8px;
}
.off {
    opacity: .35;
}
.share {
    gap: 4px;
    margin-left: -3px;
    color: #8ccbf5;
}
.account {
    display: flex;
    align-items: center;
    gap: 8px;
    margin-right: 65px;
}
.account input {
    width: 178px;
    height: 20px;
    padding-left: 3px;
    margin-right: -2px;
    background: #465064;
    font-size: 11px;
}
.account input::placeholder {
    color: #c4c8cf;
    font-style: italic;
    opacity: 1;
}
.account .caret.side {
    margin-right: -2px;
}
.user {
    gap: 5px;
    width: 114px;
}
.user .caret {
    margin-left: auto;
}
.with-caret {
    gap: 5px;
}
.rule {
    width: 1px;
    height: 18px;
    margin: 0 1px;
    background: #4b5567;
}
.help {
    fill: #333;
    font-weight: 700;
}
.window {
    display: flex;
}
.window button {
    justify-content: center;
    width: 46px;
}
.window svg {
    width: 10px;
    height: 10px;
}

/* ribbon tabs */
.tabs {
    display: flex;
    flex: none;
    height: 20px;
    padding-left: 4px;
    background: #222933;
    color: #b0b5bd;
}
.tabs a {
    padding: 0 9px;
}
.tabs .on {
    background: #3b4453;
    color: #fff;
}
.tabs button {
    gap: 4px;
    margin-left: 12px;
}
.tabs svg {
    width: 15px;
    height: 8px;
}

/* ribbon */
.ribbon {
    display: flex;
    flex: none;
    height: 99px;
    padding-left: 1px;
    background: #3b4453;
}
.panel {
    display: flex;
    flex-direction: column;
    border-right: 1px solid #222933;
}
.tools {
    display: flex;
    height: 79px;
    padding-top: 5px;
}
.panel h2, .panel h2 span {
    display: flex;
    align-items: center;
    justify-content: center;
    gap: 6px;
    height: 20px;
    margin: 0;
    font-size: 12px;
    font-weight: 400;
}
.big {
    flex-direction: column;
    flex: none;
    width: 46px;
    padding-top: 3px;
    line-height: 15px;
    text-align: center;
}
.big svg {
    width: 32px;
    height: 32px;
    margin-bottom: 4px;
}
.big .caret {
    margin-top: 2px;
}
.col {
    display: grid;
    grid-template-rows: 24px 24px 24px;
    align-items: center;
    align-content: start;
}
.tool {
    gap: 5px;
}
.tool .caret {
    margin-left: auto;
}
.glyph {
    fill: #d9d9d9;
    font: 700 38px "Liberation Sans", sans-serif;
}
.row {
    display: flex;
    gap: 8px;
}
.draw { width: 225px; }
.draw .line { width: 40px; margin-left: 2px; }
.draw .circle { margin-left: 4px; }
.draw .col { margin-left: 2px; }
.draw .tool { width: 28px; }
.modify { width: 250px; }
.modify .tools { padding-left: 7px; }
.modify .c1 { width: 72px; }
.modify .c2 { width: 69px; }
.modify .c3 { width: 75px; }
.modify .c3 .tool { width: 61px; }
.annotation { width: 189px; }
.annotation .text { width: 40px; margin-left: 4px; }
.annotation .dim { width: 62px; margin-left: 1px; }
.annotation .col { width: 68px; margin-left: 6px; }
.layers { width: 273px; }
.layers .big { width: 62px; }
.layers .col { width: 208px; }
.layers .row { padding-left: 4px; }
.block { width: 201px; }
.block .insert { width: 42px; }
.block .detect { width: 36px; }
.block .col { width: 94px; margin-left: 7px; }
.block .tool { gap: 4px; }
.properties { width: 265px; }
.properties .big { width: 64px; }
.properties .combos { flex: 1; margin: 0 2px; }
.groups { width: 69px; }
.groups .big { width: 42px; }
.groups .tool { justify-content: center; width: 24px; height: 22px; }
.groups .active { background: #46607f; border: 1px solid #6cc0ff; }
.utilities { width: 97px; }
.utilities .big { width: 73px; }
.clipboard { width: 91px; }
.clipboard .big { width: 55px; }
.clipboard .tool { width: 26px; gap: 3px; margin-left: 1px; }
.view { width: 100px; border: 0; }
.view .big { width: 62px; }
.panel.view h2 { justify-content: flex-start; padding-left: 5px; }

.combo {
    display: flex;
    align-items: center;
    gap: 4px;
    height: 22px;
    padding: 0 2px 0 4px;
    border: 1px solid #2b3441;
    background: #4d596d;
}
.combo .swatch {
    flex: none;
    width: 16px;
    height: 16px;
    border: 1px solid #d9d9d9;
    background: #803f3f;
}
.layers .combo svg {
    margin-right: -1px;
}
.properties .combo .swatch {
    margin-left: 2px;
}
.combo .stroke {
    width: 64px;
    height: 1px;
    margin: 0 -2px 0 2px;
    background: #fff;
}
.combo select {
    flex: 1;
    appearance: none;
    background: none;
}
.layers .combo select {
    margin-left: 1px;
}
.launcher {
    width: 6px;
    height: 6px;
}
.panel.properties h2 {
    display: grid;
    grid-template-columns: 1fr auto 1fr;
    padding: 0 5px;
}
.properties h2 span {
    grid-column: 2;
}
.properties .launcher {
    justify-self: end;
}

/* drawing tabs */
.filetabs, .layouts {
    display: flex;
    align-items: center;
}
.filetabs {
    flex: none;
    height: 31px;
    padding-left: 16px;
    border-bottom: 4px solid #3b4453;
    background: #222933;
}
.filetabs a {
    height: 24px;
    margin-top: 3px;
    padding: 0 5px 0 8px;
}
.filetabs .on {
    gap: 6px;
    padding: 0 11px 0 17px;
    background: #3b4453;
    clip-path: polygon(10px 0, 100% 0, calc(100% - 10px) 100%, 0 100%);
    font-weight: 700;
}
.menu {
    width: 16px;
    height: 12px;
}
.plus {
    width: 14px;
    height: 14px;
    margin: 0 9px;
}
.slash {
    width: 8px;
    height: 16px;
    background: linear-gradient(116deg, transparent 46%, #555e6b 47%, #555e6b 54%, transparent 55%);
}
.filetabs .menu {
    margin-right: 10px;
}
.close {
    width: 8px;
    height: 8px;
    margin-right: 2px;
    stroke: #a5abb5;
    stroke-width: 2;
}

/* model space */
.canvas {
    position: relative;
    flex: 1;
    min-height: 0;
    background: #fff;
    color: #000;
}
.drawing {
    width: 100%;
    height: 100%;
    stroke: #868686;
}
.drawing .solid {
    fill: #fff;
}
.drawing .grade {
    stroke: #985050;
}
.people {
    stroke: #5cae1a;
}
.cross {
    stroke: #000;
}
.viewlabel {
    position: absolute;
    top: 6px;
    left: 3px;
}
.viewctl {
    position: absolute;
    top: 8px;
    right: 9px;
    display: flex;
    gap: 6px;
}
.viewctl svg {
    width: 14px;
    height: 14px;
    stroke: #555;
}
.viewcube {
    position: absolute;
    top: 38px;
    right: 12px;
    display: grid;
    grid-template-columns: 30px 82px 30px;
    grid-template-rows: 24px 88px 24px;
    place-items: center;
    color: #d9d9d9;
    font-size: 20px;
    text-shadow: 0 0 1px #777, 0 0 1px #777;
}
.viewcube::before {
    content: "";
    grid-area: 1 / 1 / 4 / 4;
    width: 122px;
    height: 122px;
    border: 14px solid #fbfbfb;
    border-radius: 50%;
}
.north { grid-area: 1 / 2; }
.west { grid-area: 2 / 1; }
.east { grid-area: 2 / 3; }
.south { grid-area: 3 / 2; }
.viewcube button {
    grid-area: 2 / 2;
    justify-content: center;
    width: 52px;
    height: 52px;
    border: 1px solid #7f7f7f;
    background: #dfe3e7;
    box-shadow: inset 0 0 0 9px #ececec;
    color: #8a9096;
    font-size: 12px;
    font-weight: 700;
    text-shadow: none;
}
.wcs {
    position: absolute;
    top: 193px;
    right: 59px;
    gap: 5px;
    height: 17px;
    padding: 0 4px;
    border-radius: 4px;
    background: #e8ebf5;
    color: #7d8086;
    font-family: "Liberation Sans", sans-serif;
    font-size: 11px;
}
.wcs svg {
    width: 10px;
    height: 6px;
    stroke: #b5b9c4;
}
.navbar {
    position: absolute;
    top: 234px;
    right: 2px;
    display: flex;
    flex-direction: column;
    align-items: center;
    width: 36px;
    height: 216px;
    padding: 3px 2px;
    border: 2px solid #c4c4c4;
    border-radius: 5px;
    background: #f4f4f4;
}
.navbar svg {
    width: 24px;
    height: 24px;
    margin-top: 3px;
    stroke: #d2d5d5;
}
.navbar .lens {
    fill: #f4f4f4;
}
.navbar .corner {
    width: 8px;
    height: 8px;
    align-self: flex-end;
    margin: 0 0 5px;
}
.navbar .last {
    margin: auto 0 0;
}
.navbar .caret {
    margin: 6px 0 2px;
    border-top-color: #c9cccc;
}
.navbar hr {
    width: 26px;
    margin: 2px 0 1px;
    border: 0;
    border-top: 1px solid #d2d5d5;
}

/* command line */
.command {
    position: absolute;
    right: 142px;
    bottom: 1px;
    left: 143px;
    display: flex;
    align-items: center;
    height: 26px;
    padding-right: 4px;
    border: 1px solid #656b75;
    border-radius: 2px;
    background: #fff;
}
.grip {
    display: flex;
    align-items: center;
    align-self: stretch;
    width: 57px;
    padding-left: 3px;
    background: #6b717b;
}
.dots {
    width: 5px;
    height: 18px;
    margin-right: 7px;
    background: repeating-linear-gradient(#6b717b 0 1px, transparent 1px 3px), repeating-linear-gradient(90deg, #ececec 0 2px, #6b717b 2px 3px);
}
.grip svg {
    width: 10px;
    height: 10px;
    margin-right: 11px;
    stroke: #ececec;
    stroke-width: 2;
}
.grip .wrench {
    width: 16px;
    height: 16px;
    margin: 0;
    stroke: none;
}
.prompt {
    width: 16px;
    height: 12px;
    margin: 0 2px 0 4px;
    stroke: #8a8a8a;
}
.command .wide {
    border-top-color: #777;
}
.command input {
    flex: 1;
    margin-left: 6px;
    font: italic 12px "Liberation Mono", monospace;
}
.command input::placeholder {
    color: #8f8f8f;
    opacity: 1;
}

/* status bar */
.status {
    display: flex;
    justify-content: space-between;
    flex: none;
    height: 33px;
    margin-bottom: 2px;
    padding: 0 2px 0 16px;
    border-top: 4px solid #3b4453;
    background: #222933;
}
.layouts {
    align-self: flex-start;
    height: 24px;
}
.layouts a {
    height: 24px;
    padding: 1px 7px 0 6px;
}
.layouts .on {
    margin-left: 9px;
    padding: 1px 16px 0 17px;
    background: #3b4453;
    clip-path: polygon(10px 0, 100% 0, calc(100% - 10px) 100%, 0 100%);
    font-weight: 700;
}
.toggles {
    display: flex;
    gap: 3px;
    height: 24px;
    margin-top: 2px;
}
.set {
    display: flex;
    align-items: center;
    background: #3b4453;
}
.joined {
    margin-left: -2px;
}
.set button {
    justify-content: center;
    width: 24px;
    height: 24px;
}
.set .on {
    width: 23px;
    background: #5b8cc3;
}
.set .caret {
    margin: 0 4px;
}
.joined .caret {
    margin: 0 5px;
}
.model button {
    width: 47px;
}
.set .scale {
    width: 20px;
}
.pair button {
    width: 28px;
}
.end {
    margin-left: -1px;
}
```
